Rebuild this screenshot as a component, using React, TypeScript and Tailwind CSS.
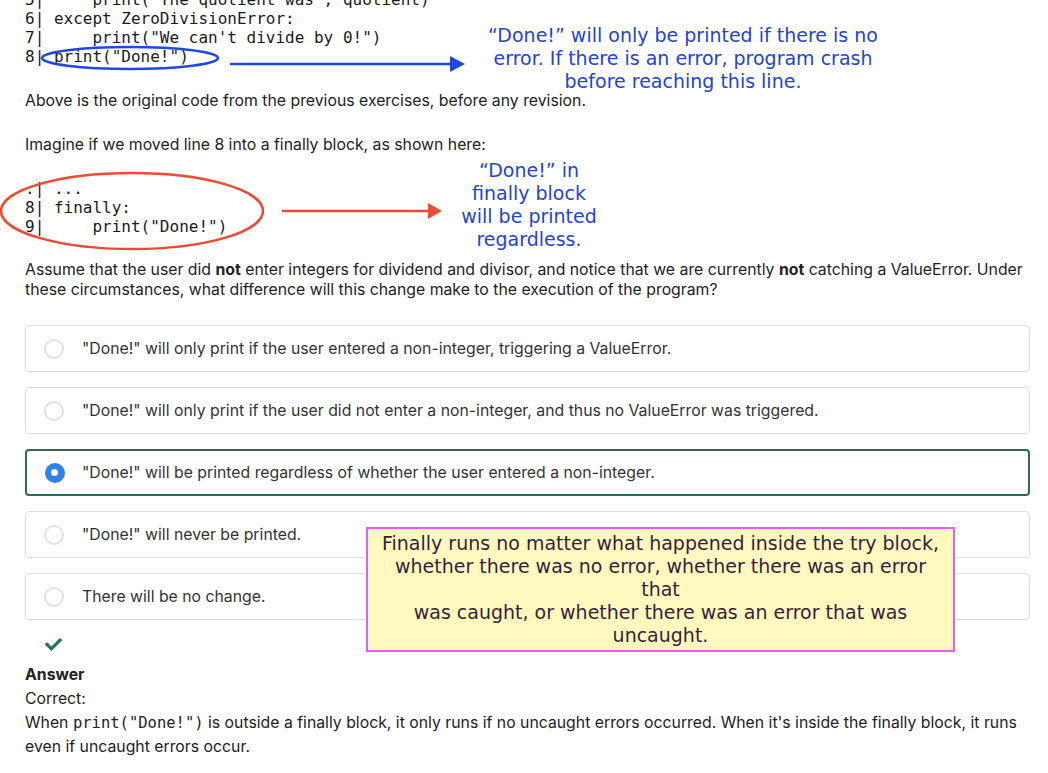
import React from 'react';
import { FaCheck } from 'react-icons/fa';

const options = [
  '"Done!" will only print if the user entered a non-integer, triggering a ValueError.',
  '"Done!" will only print if the user did not enter a non-integer, and thus no ValueError was triggered.',
  '"Done!" will be printed regardless of whether the user entered a non-integer.',
  '"Done!" will never be printed.',
  'There will be no change.',
];

const Code: React.FC<{ lines: string[]; className?: string }> = ({ lines, className = '' }) => (
  <pre className={`font-['DejaVu_Sans_Mono',monospace] text-[16px] leading-[19px] text-[#1a1a1a] whitespace-pre ${className}`}>
    {lines.join('\n')}
  </pre>
);

const Radio: React.FC<{ checked?: boolean }> = ({ checked }) =>
  checked ? (
    <span className="flex h-[20px] w-[20px] items-center justify-center rounded-full bg-[#2f80ed]">
      <span className="h-[7px] w-[7px] rounded-full bg-white" />
    </span>
  ) : (
    <span className="h-[20px] w-[20px] rounded-full border-2 border-[#e2e2e2] bg-white" />
  );

export default function App() {
  return (
    <div className="relative h-[773px] w-[1048px] overflow-hidden bg-white font-['Inter','Liberation_Sans',sans-serif] text-[15.8px] text-[#222]">
      <div className="px-[25px]">
        {/* original code, scrolled partly out of view */}
        <Code
          className="-mt-[10px]"
          lines={[
            '5|     print("The quotient was", quotient)',
            '6| except ZeroDivisionError:',
            '7|     print("We can\'t divide by 0!")',
            '8| print("Done!")',
          ]}
        />
        <p className="mt-[25px] leading-[20px]">Above is the original code from the previous exercises, before any revision.</p>
        <p className="mt-[24px] leading-[20px]">Imagine if we moved line 8 into a finally block, as shown here:</p>
        <Code
          className="mt-[24px]"
          lines={['.| ...', '8| finally:', '9|     print("Done!")']}
        />
        <p className="mt-[24px] mr-[-15px] leading-[20px]">
          Assume that the user did <b>not</b> enter integers for dividend and divisor, and notice that we are currently{' '}
          <b>not</b> catching a ValueError. Under these circumstances, what difference will this change make to the
          execution of the program?
        </p>

        {/* answer choices */}
        <div className="mt-[25px] mr-[-7px] flex flex-col gap-[15px]">
          {options.map((o, i) => (
            <div
              key={i}
              className={`flex h-[47px] items-center rounded-[4px] ${
                i === 2 ? 'border-2 border-[#2d6a4f]' : 'border border-[#dedede]'
              }`}
            >
              <div className={`flex justify-center ${i === 2 ? 'w-[55px]' : 'w-[56px]'}`}>
                <Radio checked={i === 2} />
              </div>
              <span className="text-[#333]">{o}</span>
            </div>
          ))}
        </div>

        <div className="mt-[16px] pl-[20px] text-[#1f7a50]">
          <FaCheck size={17} />
        </div>
        <div className="mt-[10px] font-bold leading-[24px]">Answer</div>
        <div className="leading-[24px]">Correct:</div>
        <p className="mr-[-18px] leading-[24px]">
          When <code className="font-['DejaVu_Sans_Mono',monospace] text-[15.5px]">print("Done!")</code> is outside a
          finally block, it only runs if no uncaught errors occurred. When it's inside the finally block, it runs even
          if uncaught errors occur.
        </p>
      </div>

      {/* hand-drawn annotations laid over the page */}
      <svg className="pointer-events-none absolute left-0 top-0" width="1048" height="773">
        <ellipse cx="130" cy="58" rx="88" ry="11" fill="none" stroke="#2048e0" strokeWidth="2.5" />
        <line x1="230" y1="64" x2="452" y2="64" stroke="#2048e0" strokeWidth="2.5" />
        <polygon points="450,56 465,64 450,72" fill="#2048e0" />
        <ellipse cx="132" cy="211" rx="131" ry="38" fill="none" stroke="#ec4a32" strokeWidth="2.5" />
        <line x1="282" y1="211" x2="430" y2="211" stroke="#ec4a32" strokeWidth="2.5" />
        <polygon points="428,203 442,211 428,219" fill="#ec4a32" />
      </svg>

      <div className="absolute left-[484px] top-[24px] w-[398px] text-center font-['DejaVu_Sans',sans-serif] text-[19px] leading-[23px] text-[#2443d0]">
        “Done!” will only be printed if there is no error. If there is an error, program crash before reaching this
        line.
      </div>
      <div className="absolute left-[456px] top-[159px] w-[146px] text-center font-['DejaVu_Sans',sans-serif] text-[19px] leading-[23px] text-[#2443d0]">
        “Done!” in finally block will be printed regardless.
      </div>

      <div className="absolute left-[366px] top-[527px] flex h-[125px] w-[589px] flex-col justify-center border-2 border-[#e85de8] bg-[#fff9c0] px-1 text-center font-['DejaVu_Sans',sans-serif] text-[19px] leading-[23px] text-[#3b1c3b]">
        <span>Finally runs no matter what happened inside the try block,</span>
        <span>whether there was no error, whether there was an error</span>
        <span>that</span>
        <span>was caught, or whether there was an error that was</span>
        <span>uncaught.</span>
      </div>
    </div>
  );
}
